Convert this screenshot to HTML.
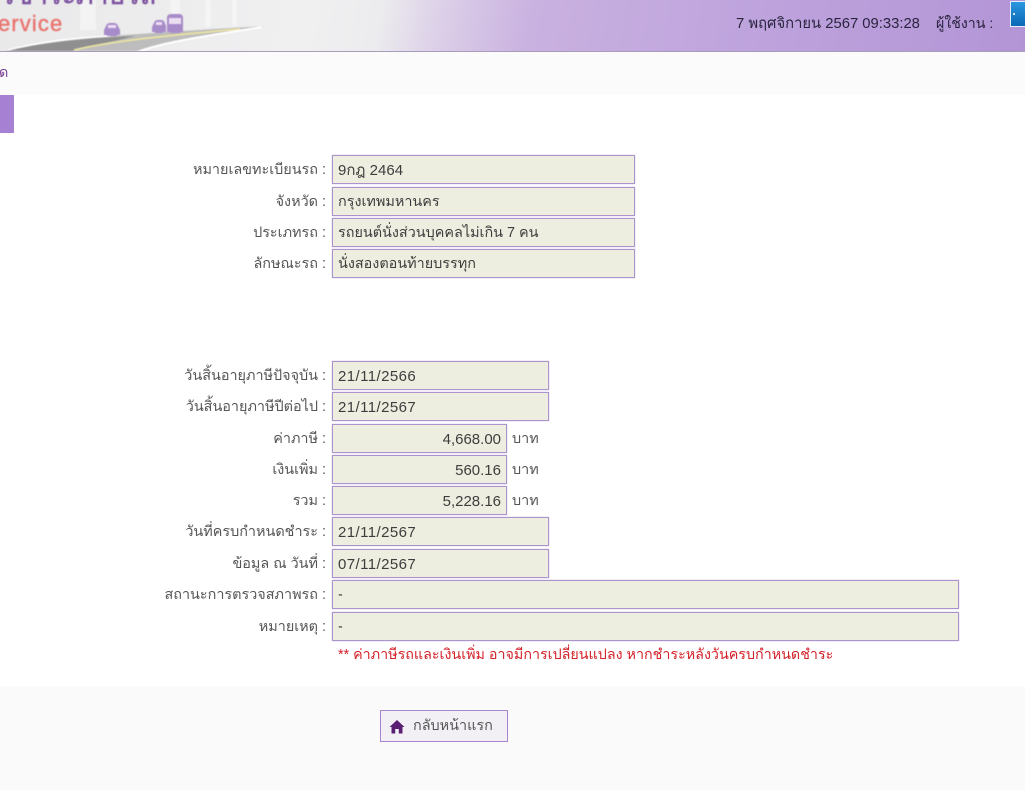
<!DOCTYPE html>
<html lang="th">
<head>
<meta charset="utf-8">
<title>e-Service</title>
<style>
html,body{margin:0;padding:0;background:#fff;}
body{width:1025px;height:790px;position:relative;overflow:hidden;font-family:"Liberation Sans","Noto Sans CJK SC",sans-serif;font-size:14.4px;color:#444;}
.a{position:absolute;}
.hdr{left:0;top:0;width:1025px;height:51px;background:linear-gradient(100deg,#e9e9ea 0,#f0f0f1 30%,#ececee 37%,#dccfe8 43%,#c9b1e0 52%,#bda2dc 75%,#b395d6 100%);border-bottom:1px solid #a99cba;}
.crumb{left:0;top:52px;width:1025px;height:43px;background:#fbfbfb;}
.foot{left:0;top:686px;width:1025px;height:104px;background:#fafafa;}
.tab{left:0;top:95px;width:14px;height:38px;background:#a680d3;}
.lb{left:100px;width:226px;height:29px;line-height:29px;padding-top:1px;text-align:right;color:#555;white-space:nowrap;}
.f{left:332px;box-sizing:border-box;height:29px;line-height:27px;padding:1px 5px 0;background:#eeeee0;border:1px solid #ab93cb;box-shadow:0 0 1px #b9a5d6;color:#3d3d3d;white-space:nowrap;}
.n{font-size:15px;}
.d{font-size:15px;letter-spacing:.42px;}
.w1{width:303px}.w2{width:217px}.w3{width:175px;text-align:right}.w4{width:627px}
.u{left:512px;height:29px;line-height:29px;padding-top:1px;color:#555;}
.btn{left:380px;top:710px;width:128px;height:32px;box-sizing:border-box;border:1px solid #a585cc;background:#f2f0f4;line-height:30px;padding-left:32px;color:#555;white-space:nowrap;}
</style>
</head>
<body>
<div class="a hdr"></div>
<svg class="a" style="left:0;top:0" width="290" height="51" viewBox="0 0 290 51">
<g style="filter:blur(.6px)">
<g fill="#fff" opacity=".4"><rect x="80" y="0" width="16" height="30"/><rect x="170" y="0" width="10" height="28"/><rect x="205" y="0" width="6" height="27"/><rect x="232" y="0" width="5" height="26"/></g>
<path d="M6 51 C60 38 130 34 265 26 C210 35 175 42 135 51 Z" fill="#bdbdbd"/>
<path d="M6 51 C50 41 90 38 135 36 C115 41 90 46 72 51 Z" fill="#8f8f8f"/>
<path d="M74 50 C110 41 165 36 240 29" stroke="#ede6a0" stroke-width="1.6" fill="none"/>
<path d="M140 51 C165 42 205 36 262 27" stroke="#fff" stroke-width="2" fill="none"/>
<path d="M8 50 C40 42 70 38 110 36" stroke="#fff" stroke-width="1.5" fill="none"/>
<g fill="#a88bc9">
<path d="M104 30 L107 24 Q108 23 110 23 H114 Q116 23 117 24 L120 30 V35 H117 V36 H107 V35 H104 Z"/>
<path d="M152 27 L155 21 Q156 20 158 20 H161 Q163 20 164 21 L166 26 V32 H163 V33 H155 V32 H152 Z"/>
<path d="M167 18 Q167 14 171 14 H179 Q183 14 183 18 V32 H180 V33 H170 V32 H167 Z"/>
</g>
<g fill="#ecdff3"><rect x="108" y="25" width="8" height="3"/><rect x="156" y="22" width="6" height="3"/><rect x="169" y="18" width="12" height="6"/></g>
<text x="-30" y="4" font-family="Liberation Sans" font-size="26" textLength="186" lengthAdjust="spacingAndGlyphs" stroke="#7a4f9e" stroke-width=".5" fill="#7a4f9e">การชำระภาษีรถ</text>
<text x="-2" y="31" font-family="Liberation Sans" font-size="22" letter-spacing="1.1" stroke="#e9746f" stroke-width=".4" fill="#e9746f">ervice</text>
</g>
</svg>
<div class="a" style="left:736px;top:15px;line-height:18px;font-size:14.8px;color:#2a2440;white-space:nowrap;">7 พฤศจิกายน 2567 09:33:28</div>
<div class="a" style="left:936px;top:15px;line-height:18px;font-size:14.2px;color:#2a2440;white-space:nowrap;">ผู้ใช้งาน :</div>
<div class="a" style="left:1010px;top:1px;width:15px;height:26px;box-sizing:border-box;border:1px solid #e6eef8;border-right:0;background:linear-gradient(#2b97de,#0a68b8);"></div>
<div class="a" style="left:1013px;top:13px;width:2px;height:2px;background:#cfe8fa;"></div>
<div class="a crumb"></div>
<div class="a" style="left:-1px;top:64px;line-height:18px;color:#7a3f96;">ด</div>
<div class="a tab"></div>

<div class="a lb" style="top:155px">หมายเลขทะเบียนรถ :</div><div class="a f w1 n" style="top:155px">9กฎ 2464</div>
<div class="a lb" style="top:187px">จังหวัด :</div><div class="a f w1" style="top:187px">กรุงเทพมหานคร</div>
<div class="a lb" style="top:218px">ประเภทรถ :</div><div class="a f w1" style="top:218px">รถยนต์นั่งส่วนบุคคลไม่เกิน 7 คน</div>
<div class="a lb" style="top:249px">ลักษณะรถ :</div><div class="a f w1" style="top:249px">นั่งสองตอนท้ายบรรทุก</div>

<div class="a lb" style="top:361px">วันสิ้นอายุภาษีปัจจุบัน :</div><div class="a f w2 d" style="top:361px">21/11/2566</div>
<div class="a lb" style="top:392px">วันสิ้นอายุภาษีปีต่อไป :</div><div class="a f w2 d" style="top:392px">21/11/2567</div>
<div class="a lb" style="top:424px">ค่าภาษี :</div><div class="a f w3 n" style="top:424px">4,668.00</div><div class="a u" style="top:424px">บาท</div>
<div class="a lb" style="top:455px">เงินเพิ่ม :</div><div class="a f w3 n" style="top:455px">560.16</div><div class="a u" style="top:455px">บาท</div>
<div class="a lb" style="top:486px">รวม :</div><div class="a f w3 n" style="top:486px">5,228.16</div><div class="a u" style="top:486px">บาท</div>
<div class="a lb" style="top:517px">วันที่ครบกำหนดชำระ :</div><div class="a f w2 d" style="top:517px">21/11/2567</div>
<div class="a lb" style="top:549px">ข้อมูล ณ วันที่ :</div><div class="a f w2 d" style="top:549px">07/11/2567</div>
<div class="a lb" style="top:580px">สถานะการตรวจสภาพรถ :</div><div class="a f w4" style="top:580px">-</div>
<div class="a lb" style="top:612px">หมายเหตุ :</div><div class="a f w4" style="top:612px">-</div>
<div class="a" style="left:338px;top:646px;line-height:18px;font-size:14.3px;color:#d3222a;white-space:nowrap;">** ค่าภาษีรถและเงินเพิ่ม อาจมีการเปลี่ยนแปลง หากชำระหลังวันครบกำหนดชำระ</div>

<div class="a foot"></div>
<div class="a btn">กลับหน้าแรก</div>
<svg class="a" style="left:389px;top:719px" width="16" height="15" viewBox="0 0 16 15"><path d="M8 1 L15.5 8 H13.5 V14.5 H9.8 V10 H6.2 V14.5 H2.5 V8 H0.5 Z" fill="#5a1f73"/></svg>
</body>
</html>
